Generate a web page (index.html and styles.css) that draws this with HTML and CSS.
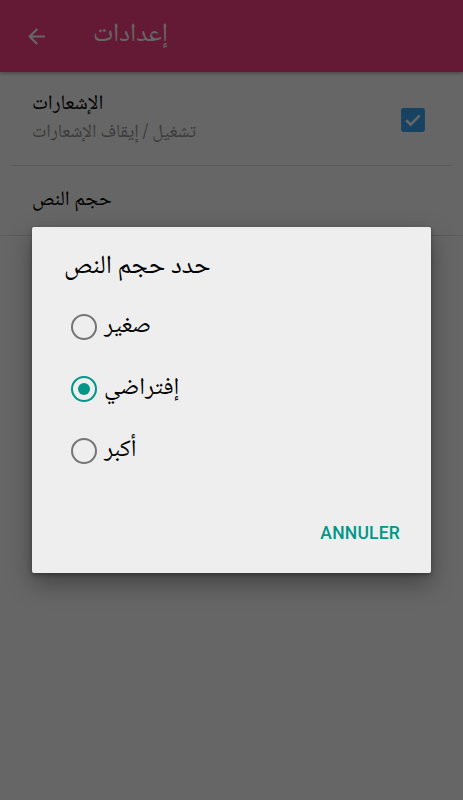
FILE: index.html
```html
<!DOCTYPE html>
<html lang="ar">
<head>
<meta charset="utf-8">
<link rel="stylesheet" href="styles.css">
</head>
<body>
<div class="screen">
  <header class="appbar">
    <svg class="back" width="24" height="24" viewBox="0 0 24 24"><path d="M20 11H7.83l5.59-5.59L12 4l-8 8 8 8 1.41-1.41L7.83 13H20v-2z" fill="currentColor"/></svg>
    <span class="appbar-title">إعدادات</span>
  </header>
  <div class="list">
    <div class="item">
      <div class="item-text">
        <div class="item-title">الإشعارات</div>
        <div class="item-sub">تشغيل / إيقاف الإشعارات</div>
      </div>
      <svg class="checkbox" width="24" height="24" viewBox="0 0 24 24"><rect x="1" y="1" width="22" height="22" rx="2" fill="#3aa5f5"/><path d="M5.8 12.2l4 4 8.4-8.4" fill="none" stroke="#fff" stroke-width="2.4"/></svg>
    </div>
    <div class="divider"></div>
    <div class="item item-single">
      <div class="item-title">حجم النص</div>
    </div>
    <div class="divider full"></div>
  </div>
  <div class="scrim"></div>
  <div class="dialog">
    <div class="dialog-title">حدد حجم النص</div>
    <div class="options">
      <div class="option"><span class="radio"></span><span class="label">صغير</span></div>
      <div class="option"><span class="radio checked"></span><span class="label">إفتراضي</span></div>
      <div class="option"><span class="radio"></span><span class="label">أكبر</span></div>
    </div>
    <div class="actions"><span class="btn">ANNULER</span></div>
  </div>
</div>
</body>
</html>
```
FILE: styles.css
```css
* { box-sizing: border-box; }
html, body { margin: 0; padding: 0; }
body {
  width: 463px;
  height: 800px;
  overflow: hidden;
  background: #fff;
  font-family: "Noto Naskh Arabic", "Noto Sans Arabic", "DejaVu Sans", sans-serif;
}
.screen { position: relative; width: 463px; height: 800px; background: #fff; }
.appbar {
  height: 72px;
  background: #fa4286;
  display: flex;
  align-items: center;
  padding-left: 24px;
  color: #fff;
  box-shadow: 0 2px 3px rgba(0,0,0,0.25);
}
.back { width: 25px; height: 25px; }
.appbar-title { margin-left: 44px; font-size: 26px; line-height: 40px; margin-top: -2px; }
.list { padding: 0 11px; }
.item {
  height: 93px;
  display: flex;
  align-items: center;
  justify-content: space-between;
  padding: 0 26px 0 21px;
}
.item-text { display: flex; flex-direction: column; gap: 4px; }
.item-title { font-size: 20.5px; color: #000; line-height: 24px; }
.item-sub { font-size: 18.5px; color: #949494; line-height: 24px; }
.item-single { height: 69px; }
.checkbox { width: 26px; height: 26px; margin-top: 2px; }
.divider { height: 1px; background: #e2e2e2; }
.divider.full { margin: 0 -11px; }
.scrim { position: absolute; inset: 0; background: rgba(0,0,0,0.6); }
.dialog {
  position: absolute;
  left: 32px;
  top: 227px;
  width: 399px;
  height: 346px;
  background: #eeeeee;
  border-radius: 2px;
  box-shadow: 0 10px 24px rgba(0,0,0,0.35), 0 2px 4px rgba(0,0,0,0.3);
  display: flex;
  flex-direction: column;
  padding: 22px 31px 30px 32px;
}
.dialog-title { font-size: 26px; color: #000; line-height: 36px; }
.options { margin-top: 22px; display: flex; flex-direction: column; gap: 22px; }
.option { display: flex; align-items: center; height: 40px; }
.radio {
  width: 26px; height: 26px;
  border: 2.5px solid #757575;
  border-radius: 50%;
  margin-left: 7px;
  flex: none;
  position: relative;
}
.radio.checked { border-color: #009688; }
.radio.checked::after {
  content: "";
  position: absolute;
  left: 50%; top: 50%;
  width: 12px; height: 12px;
  margin: -6px 0 0 -6px;
  background: #009688;
  border-radius: 50%;
}
.label { font-size: 24px; line-height: 36px; margin-left: 7px; color: #000; }
.actions { margin-top: auto; display: flex; justify-content: flex-end; }
.btn {
  font-family: Roboto, "Liberation Sans", sans-serif;
  font-weight: 500;
  font-size: 17.5px;
  line-height: 20px;
  color: #009688;
  letter-spacing: 0.2px;
}
```
